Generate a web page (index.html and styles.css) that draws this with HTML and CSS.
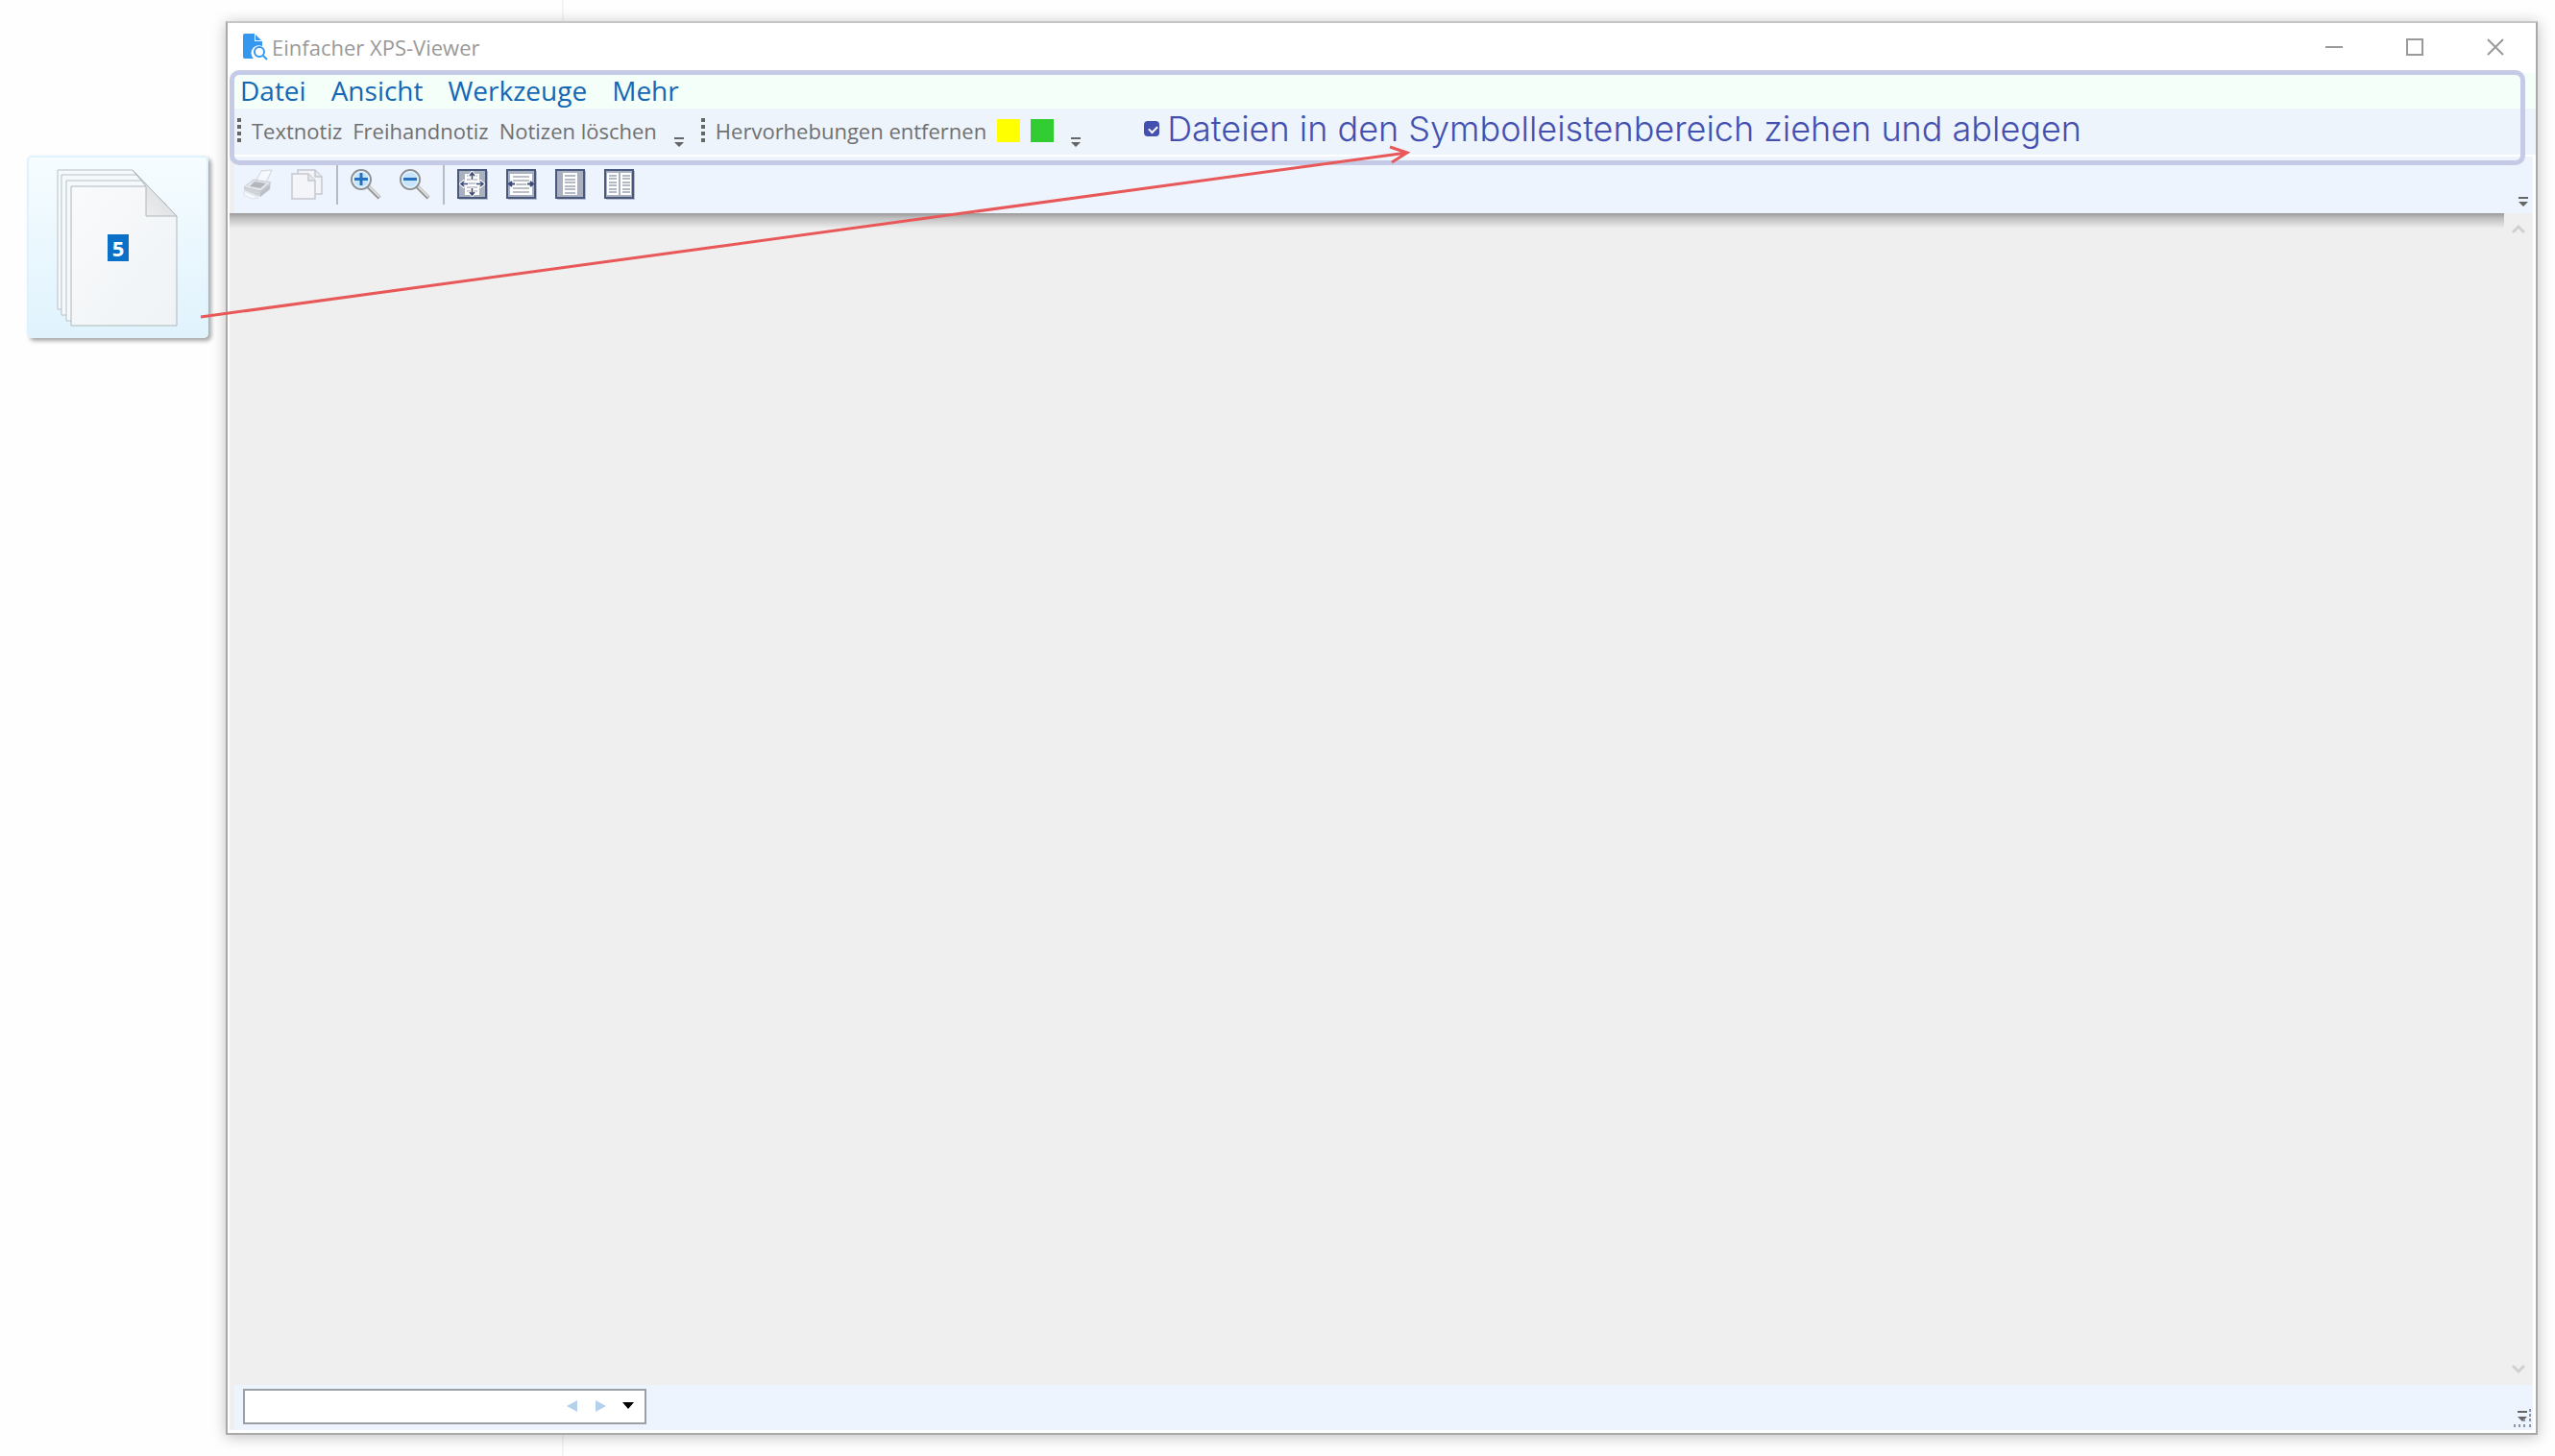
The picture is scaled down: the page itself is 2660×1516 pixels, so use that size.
FILE: index.html
```html
<!DOCTYPE html>
<html lang="de">
<head>
  <meta charset="UTF-8">
  <meta name="viewport" content="width=device-width, initial-scale=1.0">
  <title>Einfacher XPS-Viewer</title>
  <link rel="stylesheet" href="styles.css">
</head>
<body>
  <div class="desktop">
    <!-- dragged files -->
    <aside class="side">
      <div class="drag-files">
        <svg width="126" height="164" viewBox="0 0 126 164">
          <defs>
            <linearGradient id="paper" x1="0" y1="0" x2="1" y2="1">
              <stop offset="0" stop-color="#f9fafb"/>
              <stop offset="1" stop-color="#eff3f6"/>
            </linearGradient>
            <linearGradient id="fold" x1="0" y1="1" x2="1" y2="0">
              <stop offset="0" stop-color="#f0f2f3"/>
              <stop offset="1" stop-color="#d2d5d7"/>
            </linearGradient>
          </defs>
          <g fill="#f4f9fc" stroke="#b9bfc3">
            <path d="M1 1H79L110 34V146H1Z"/>
            <path d="M5 6H83L114 37V152H5Z"/>
            <path d="M10 12H88L119 43V158H10Z"/>
          </g>
          <path d="M15 18H93L125 49V163H15Z" fill="url(#paper)" stroke="#b0b6ba"/>
          <path d="M93 18L79 1L125 49H93Z" fill="url(#fold)" stroke="#b0b6ba"/>
        </svg>
        <span class="count">5</span>
      </div>
    </aside>

    <main class="window">
      <header class="titlebar">
        <svg width="26" height="28" viewBox="0 0 26 28">
          <path d="M2 0H12V8H20V13A8 8 0 0 0 11 26H2Q0 26 0 24V2Q0 0 2 0Z" fill="#3597ee"/>
          <path d="M13 1L19 7H13Z" fill="#3597ee"/>
          <circle cx="17" cy="19" r="5" fill="#fff" stroke="#3597ee" stroke-width="2"/>
          <path d="M21 23L25 27" stroke="#3597ee" stroke-width="2"/>
        </svg>
        <h1>Einfacher XPS-Viewer</h1>
        <div class="window-buttons">
          <button type="button" aria-label="Minimieren"><svg width="20" height="20"><path d="M1 10H19"/></svg></button>
          <button type="button" aria-label="Maximieren"><svg width="20" height="20"><path d="M2 2H18V18H2Z"/></svg></button>
          <button type="button" aria-label="Schließen"><svg width="20" height="20"><path d="M2 2L18 18M18 2L2 18"/></svg></button>
        </div>
      </header>

      <div class="bars">
        <nav class="menubar">
          <button type="button">Datei</button>
          <button type="button">Ansicht</button>
          <button type="button">Werkzeuge</button>
          <button type="button">Mehr</button>
        </nav>
        <div class="notes-bar">
          <div class="tool-group">
            <span class="grip"></span>
            <button type="button">Textnotiz</button>
            <button type="button">Freihandnotiz</button>
            <button type="button">Notizen löschen</button>
          </div>
          <button class="overflow" type="button" aria-label="Weitere Notizbefehle"><svg width="10" height="12"><path d="M0 1H10V3H0ZM0 6H10L5 11Z"/></svg></button>
          <div class="tool-group">
            <span class="grip"></span>
            <button type="button">Hervorhebungen entfernen</button>
            <button class="swatch yellow" type="button" aria-label="Gelb"></button>
            <button class="swatch green" type="button" aria-label="Grün"></button>
          </div>
          <button class="overflow" type="button" aria-label="Weitere Farben"><svg width="10" height="12"><path d="M0 1H10V3H0ZM0 6H10L5 11Z"/></svg></button>
          <label class="hint">
            <input type="checkbox" checked>
            <span>Dateien in den Symbolleistenbereich ziehen und ablegen</span>
          </label>
        </div>
        <div class="drop-frame"></div>
      </div>

      <div class="view-bar">
        <div class="icons">
          <button type="button" aria-label="Drucken">
            <svg width="32" height="32" viewBox="0 0 32 32">
              <path d="M14 13L20 2L31 1L25 14Z" fill="#f5f8fc" stroke="#d0d4da"/>
              <path d="M2 19L12 11L30 14L29 21L19 29L2 22Z" fill="#d0d3d8"/>
              <path d="M2 19L12 11L30 14L19 23Z" fill="#e4e6ea" stroke="#c6cad0"/>
              <path d="M8 18L13 13L25 15L19 20Z" fill="#b2b6be"/>
              <path d="M19 24L29 16V21L19 29Z" fill="#bcc1c9"/>
              <path d="M2 23L12 27L17 30L10 31L2 27Z" fill="#f4f7fb" stroke="#dfe3e8"/>
            </svg>
          </button>
          <button type="button" aria-label="Kopieren">
            <svg width="34" height="32" viewBox="0 0 34 32">
              <g fill="#f3f5f9" stroke="#c5c8ce" stroke-width="1.5">
                <path d="M7 1H25L32 8V26H7Z"/>
                <path d="M1 5H18L25 12V31H1Z"/>
                <path d="M18 5V12H25M25 1V8H32" fill="#e4e7ec"/>
              </g>
            </svg>
          </button>
        </div>
        <span class="separator"></span>
        <div class="icons">
          <button type="button" aria-label="Vergrößern">
            <svg width="32" height="32" viewBox="0 0 32 32">
              <path d="M18 18L30 30" stroke="#929292" stroke-width="4"/>
              <path d="M19 18L30 29" stroke="#dedede" stroke-width="2"/>
              <circle cx="11" cy="11" r="10" fill="#c6e4fc" stroke="#8e9296" stroke-width="2"/>
              <circle cx="11" cy="11" r="8.3" fill="none" stroke="#edf7fe" stroke-width="1.3"/>
              <path d="M4 10.500H18M11 4V17" stroke="#2672bd" stroke-width="3"/>
            </svg>
          </button>
          <button type="button" aria-label="Verkleinern">
            <svg width="32" height="32" viewBox="0 0 32 32">
              <path d="M18 18L30 30" stroke="#929292" stroke-width="4"/>
              <path d="M19 18L30 29" stroke="#dedede" stroke-width="2"/>
              <circle cx="11" cy="11" r="10" fill="#c6e4fc" stroke="#8e9296" stroke-width="2"/>
              <circle cx="11" cy="11" r="8.3" fill="none" stroke="#edf7fe" stroke-width="1.3"/>
              <path d="M4 10.500H18" stroke="#2672bd" stroke-width="3"/>
            </svg>
          </button>
        </div>
        <span class="separator"></span>
        <div class="icons">
          <button type="button" aria-label="Tatsächliche Größe">
            <svg width="32" height="32" viewBox="0 0 32 32">
              <path d="M2 2H32V32H2Z" fill="#b5bdcd"/>
              <path d="M1 1H30V30H1Z" fill="#a9b1c1" stroke="#4a587b" stroke-width="2"/>
              <path d="M8 5H23V27H8Z" fill="#fff"/>
              <path d="M10 7H21M10 11H21M10 15H21M10 19H21M10 23H21" stroke="#b4bac5" stroke-width="1.500"/>
              <path d="M15.500 2L20 7H17V11H14V7H11ZM15.500 29L20 24H17V20H14V24H11ZM2 15.500L7 11V14H11V17H7V20ZM29 15.500L24 11V14H20V17H24V20Z" fill="#fff" stroke="#fff"/>
              <path d="M15.500 5V11M13 7L15.500 4L18 7M15.500 20V27M13 24L15.500 27L18 24M4 15.500H11M7 13L4 15.500L7 18M20 15.500H27M24 13L27 15.500L24 18" fill="none" stroke="#3c4a76" stroke-width="1.500"/>
            </svg>
          </button>
          <button type="button" aria-label="Seitenbreite">
            <svg width="32" height="32" viewBox="0 0 32 32">
              <path d="M2 2H32V32H2Z" fill="#b5bdcd"/>
              <path d="M1 1H30V30H1Z" fill="#a9b1c1" stroke="#4a587b" stroke-width="2"/>
              <path d="M4 5H27V27H4Z" fill="#fff"/>
              <path d="M7 8H24M7 12H24M10 16H21M7 20H24M7 24H24" stroke="#a4abb8" stroke-width="1.500"/>
              <path d="M3 15.500H9M6 13L3 15.500L6 18M22 15.500H28M25 13L28 15.500L25 18" fill="none" stroke="#3c4a76" stroke-width="2"/>
            </svg>
          </button>
          <button type="button" aria-label="Ganze Seite">
            <svg width="32" height="32" viewBox="0 0 32 32">
              <path d="M2 2H32V32H2Z" fill="#b5bdcd"/>
              <path d="M1 1H30V30H1Z" fill="#a9b1c1" stroke="#4a587b" stroke-width="2"/>
              <path d="M8 4H23V27H8Z" fill="#fff"/>
              <path d="M10 7H21M10 11H21M10 14H21M10 18H21M10 21H21M10 25H21" stroke="#9ca4b3" stroke-width="1.500"/>
            </svg>
          </button>
          <button type="button" aria-label="Zwei Seiten">
            <svg width="32" height="32" viewBox="0 0 32 32">
              <path d="M2 2H32V32H2Z" fill="#b5bdcd"/>
              <path d="M1 1H30V30H1Z" fill="#a9b1c1" stroke="#4a587b" stroke-width="2"/>
              <path d="M3 4H15V27H3ZM17 4H28V27H17Z" fill="#fff"/>
              <path d="M5 7H13M5 10H13M5 14H13M5 17H13M5 21H13M5 24H13M19 7H27M19 10H27M19 14H27M19 17H27M19 21H27M19 24H27" stroke="#9ca4b3" stroke-width="1.500"/>
            </svg>
          </button>
        </div>
        <button class="overflow" type="button" aria-label="Weitere Ansichten"><svg width="10" height="12"><path d="M0 1H10V3H0ZM0 6H10L5 11Z"/></svg></button>
      </div>

      <div class="viewer">
        <div class="page"></div>
        <div class="scrollbar">
          <button type="button" aria-label="Nach oben"><svg width="14" height="10"><path d="M1 9L7 3L13 9"/></svg></button>
          <button type="button" aria-label="Nach unten"><svg width="14" height="10"><path d="M1 1L7 7L13 1"/></svg></button>
        </div>
      </div>

      <footer class="statusbar">
        <form class="search">
          <input type="text" aria-label="Suchen">
          <button type="button" aria-label="Zurück"><svg width="12" height="12"><path d="M11 0V12L0 6Z" fill="#b3d0ec"/></svg></button>
          <button type="button" aria-label="Weiter"><svg width="12" height="12"><path d="M1 0V12L12 6Z" fill="#b3d0ec"/></svg></button>
          <button type="button" aria-label="Suchoptionen"><svg width="12" height="12"><path d="M0 2H12L6 9Z" fill="#000"/></svg></button>
        </form>
        <svg class="resize" width="20" height="20" viewBox="0 0 20 20">
          <path d="M4 3H14V5H4ZM4 9H14L9 14Z" fill="#666"/>
          <path d="M16 1h2v3h-2zM16 6h2v3h-2zM16 11h2v3h-2zM16 17h2v3h-2zM10 11h2v3h-2zM10 17h2v3h-2zM5 17h2v3H5zM0 17h2v3H0z" fill="#8b95a8"/>
        </svg>
      </footer>
    </main>

    <!-- arrow from the files to the toolbars -->
    <svg class="drag-arrow" width="1480" height="340">
      <path d="M209 330L1465 159M1447 153L1465 159L1449 169"/>
    </svg>
  </div>
</body>
</html>
```
FILE: styles.css
```css
* {
  box-sizing: border-box;
}

body {
  margin: 0;
  font-family: "Open Sans", "Noto Sans", sans-serif;
  color: #707070;
  background: #fefefe;
}

h1 {
  margin: 0;
  font-size: 22px;
  font-weight: 400;
  line-height: 30px;
  color: #999;
}

button {
  padding: 0;
  border: none;
  background: none;
  font: inherit;
  color: inherit;
  cursor: pointer;
}

svg {
  display: block;
}

.desktop {
  position: relative;
  display: flex;
  min-height: 100vh;
  padding: 22px 18px 22px 0;
  background: linear-gradient(#f4f4f4, #f4f4f4) 585px 0 / 2px 100% no-repeat;
}

/* dragged files */
.side {
  flex: 0 0 235px;
  padding: 140px 18px 0 28px;
}

.drag-files {
  position: relative;
  width: 189px;
  height: 190px;
  padding: 12px 0 0 29px;
  border: 2px solid #e0f2fb;
  border-radius: 5px;
  background: linear-gradient(#f6fcff, #e0f3fd);
  box-shadow: 3px 3px 4px rgba(0, 0, 0, 0.35);
}

.count {
  position: absolute;
  left: 82px;
  top: 80px;
  width: 22px;
  background: #0a70c8;
  color: #fff;
  font-size: 22px;
  font-weight: 700;
  line-height: 28px;
  text-align: center;
}

/* window */
.window {
  flex: 1;
  display: flex;
  flex-direction: column;
  min-width: 0;
  border: 2px solid #a9a9a9;
  border-top-color: #c6c6c6;
  background: #fff;
  box-shadow: 0 2px 14px rgba(0, 0, 0, 0.25);
}

.titlebar {
  display: flex;
  align-items: center;
  gap: 4px;
  height: 52px;
  padding: 0 32px 2px 16px;
}

.window-buttons {
  display: flex;
  gap: 64px;
  margin-left: auto;
}

.window-buttons path {
  fill: none;
  stroke: #999;
  stroke-width: 2;
}

.bars {
  position: relative;
}

.menubar {
  display: flex;
  gap: 26px;
  height: 37px;
  margin-left: 2px;
  padding-left: 11px;
  background: #f4fffa;
  color: #1467b5;
  font-size: 28px;
  line-height: 37px;
}

.notes-bar {
  display: flex;
  align-items: center;
  height: 48px;
  margin-left: 2px;
  padding: 0 0 3px 8px;
  background: #edf4fc;
  font-size: 22px;
  line-height: 30px;
}

.tool-group {
  display: flex;
  align-items: center;
  gap: 11px;
}

.grip {
  width: 4px;
  height: 26px;
  background: repeating-linear-gradient(#666 0 4px, transparent 4px 7px);
}

.swatch {
  width: 24px;
  height: 24px;
}

.yellow {
  background: #ff0;
}

.green {
  background: #32cd32;
}

.overflow {
  align-self: flex-end;
  margin: 0 18px 4px;
}

.overflow path {
  fill: #666;
}

.hint {
  display: flex;
  align-items: center;
  gap: 8px;
  margin-left: 48px;
  padding-bottom: 4px;
  color: #4350b0;
  font-family: Inter, sans-serif;
  font-size: 36px;
  font-weight: 300;
  line-height: 40px;
}

.hint input {
  appearance: none;
  width: 16px;
  height: 16px;
  margin: 0;
  border-radius: 4px;
  background: #4350b0;
}

.hint input:checked::before {
  content: "";
  display: block;
  width: 7px;
  height: 4px;
  margin: 5px;
  border: solid #fff;
  border-width: 0 0 2px 2px;
  transform: rotate(-45deg);
}

/* drop target outline */
.drop-frame {
  position: absolute;
  inset: -3px 11px -11px 2px;
  border: 5px solid #c5cae6;
  border-radius: 10px;
  pointer-events: none;
}

.view-bar {
  display: flex;
  align-items: center;
  gap: 13px;
  height: 59px;
  margin: 2px 3px 0 2px;
  padding: 0 0 1px 8px;
  border-left: 5px solid #efefef;
  background: #edf4fd;
}

.icons {
  display: flex;
  gap: 19px;
}

.separator {
  width: 2px;
  height: 41px;
  background: #b7bcc4;
}

.view-bar .overflow {
  margin: 0 5px 5px auto;
}

.viewer {
  flex: 1;
  display: flex;
  margin: 0 3px 0 2px;
  background: #efefef;
}

.page {
  flex: 1;
  background: linear-gradient(#999, #bfbfbf 5px, #efefef 16px);
}

.scrollbar {
  display: flex;
  flex-direction: column;
  justify-content: space-between;
  align-items: center;
  width: 30px;
  padding: 11px 0;
}

.scrollbar path {
  fill: none;
  stroke: #d0d0d0;
  stroke-width: 3;
}

.statusbar {
  display: flex;
  justify-content: space-between;
  align-items: center;
  height: 47px;
  margin: 0 3px 3px 2px;
  padding: 0 0 3px 9px;
  border-left: 5px solid #efefef;
  background: #edf4fd;
}

.search {
  display: flex;
  align-items: center;
  gap: 17px;
  width: 420px;
  height: 37px;
  padding-right: 11px;
  border: 2px solid #9aa0a6;
  background: #fff;
}

.search input {
  flex: 1;
  min-width: 0;
  height: 32px;
  border: none;
  background: none;
  outline: none;
  font-size: 22px;
}

.resize {
  align-self: flex-end;
}

.drag-arrow {
  position: absolute;
  left: 0;
  top: 0;
  pointer-events: none;
}

.drag-arrow path {
  fill: none;
  stroke: #e85858;
  stroke-width: 3;
}
```
